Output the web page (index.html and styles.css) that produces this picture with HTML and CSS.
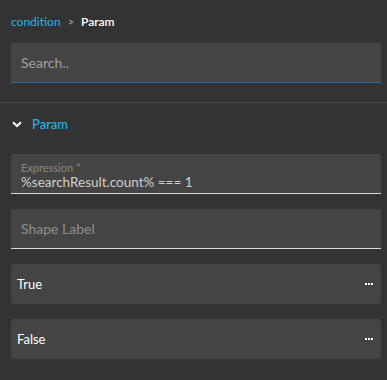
FILE: index.html
```html
<!DOCTYPE html>
<html>
<head>
<meta charset="utf-8">
<link rel="stylesheet" href="styles.css">
</head>
<body>
<div class="panel">
  <div class="crumbs">
    <span class="crumb-link">condition</span>
    <span class="crumb-sep">&gt;</span>
    <span class="crumb-current">Param</span>
  </div>
  <div class="search">
    <span class="placeholder">Search..</span>
  </div>
  <div class="divider"></div>
  <div class="section-head">
    <svg class="chev" width="10" height="7" viewBox="0 0 10 7"><path d="M1 1.2 L5 5 L9 1.2" fill="none" stroke="#ffffff" stroke-width="2"/></svg>
    <span class="section-title">Param</span>
  </div>
  <div class="field field-filled">
    <span class="field-label">Expression *</span>
    <span class="field-value">%searchResult.count% === 1</span>
  </div>
  <div class="field field-empty">
    <span class="placeholder">Shape Label</span>
  </div>
  <div class="card">
    <span class="card-title">True</span>
    <span class="dots"><i></i><i></i><i></i></span>
  </div>
  <div class="card">
    <span class="card-title">False</span>
    <span class="dots"><i></i><i></i><i></i></span>
  </div>
</div>
</body>
</html>
```

FILE: styles.css
```css
html, body {
  margin: 0;
  padding: 0;
  background: #333333;
  font-family: Lato, "Liberation Sans", sans-serif;
}
.panel {
  padding: 0 6px 0 11px;
  display: flex;
  flex-direction: column;
}
.crumbs {
  height: 43px;
  display: flex;
  align-items: center;
  gap: 6px;
  font-size: 12px;
}
.crumb-link { color: #29b2ea; }
.crumb-sep { color: #aaaaaa; font-size: 11px; margin: 0 1px; }
.crumb-current { color: #ffffff; font-weight: 600; }
.search {
  height: 39px;
  background: #444444;
  border-bottom: 1px solid #1e6fa5;
  display: flex;
  align-items: center;
  padding-left: 10px;
}
.placeholder {
  color: #8e8e8e;
  font-size: 14px;
}
.search .placeholder { color: #a0a0a0; }
.divider {
  height: 1px;
  background: #4e4e4e;
  margin: 19px -6px 0 -11px;
}
.section-head {
  height: 42px;
  display: flex;
  align-items: center;
  padding-left: 1px;
  gap: 10px;
}
.section-title {
  color: #29b2ea;
  font-size: 13px;
  font-weight: 500;
}
.field {
  height: 39px;
  background: #444444;
  border-bottom: 1px solid #d8d8d8;
  display: flex;
  flex-direction: column;
  justify-content: center;
  padding-left: 10px;
  box-sizing: border-box;
}
.field-filled { margin-top: 9px; height: 40px; padding-top: 5px; }
.field-empty { margin-top: 15px; height: 40px; }
.field-label {
  color: #888888;
  font-size: 11px;
  line-height: 13px;
}
.field-value {
  color: #cfcfcf;
  font-size: 13.5px;
  line-height: 17px;
}
.card {
  height: 40px;
  background: #444444;
  border-radius: 3px;
  margin-top: 15px;
  display: flex;
  align-items: center;
  justify-content: space-between;
  padding: 0 8px 0 6px;
}
.card-title {
  color: #ffffff;
  font-size: 13px;
}
.dots {
  display: flex;
  gap: 1px;
}
.dots i {
  display: block;
  width: 2px;
  height: 2px;
  background: #ffffff;
}
```
